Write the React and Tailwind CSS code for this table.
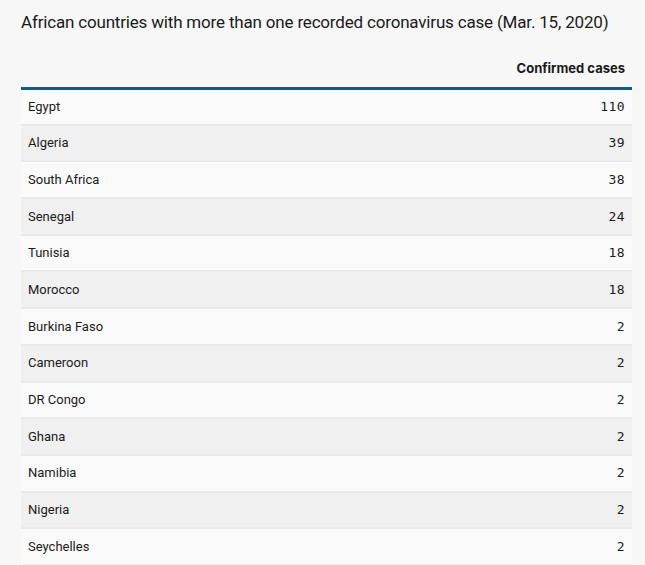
import React from 'react';

const rows = [
  ['Egypt', 110],
  ['Algeria', 39],
  ['South Africa', 38],
  ['Senegal', 24],
  ['Tunisia', 18],
  ['Morocco', 18],
  ['Burkina Faso', 2],
  ['Cameroon', 2],
  ['DR Congo', 2],
  ['Ghana', 2],
  ['Namibia', 2],
  ['Nigeria', 2],
  ['Seychelles', 2],
];

export default function App() {
  return (
    <div className="min-h-screen bg-[#f7f7f7] px-[21px] pt-[11px] text-[#1a1a1a]" style={{ fontFamily: 'Roboto, "Liberation Sans", sans-serif' }}>
      <h1 className="whitespace-nowrap text-[17px] leading-[22px] font-normal tracking-[-0.18px]">
        African countries with more than one recorded coronavirus case (Mar. 15, 2020)
      </h1>
      <table className="mt-[26px] w-[611px] border-collapse text-[13px]">
        <thead>
          <tr className="border-b-[3px] border-[#0d5a91]">
            <th></th>
            <th className="px-[7px] pb-[8px] text-right font-bold text-[13px] leading-[19.5px] font-[Inter,sans-serif]">Confirmed cases</th>
          </tr>
        </thead>
        <tbody>
          {rows.map(([name, n], i) => (
            <tr key={name} className={`border-b-2 border-[#e9e9e9] ${i % 2 ? 'bg-[#f0f0f0]' : 'bg-[#fafafa]'}`}>
              <td className="h-[36.7px] px-[7px]">{name}</td>
              <td className="h-[36.7px] px-[7px] text-right font-['DejaVu_Sans_Mono',monospace] text-[13px] tracking-[0.4px]">{n}</td>
            </tr>
          ))}
        </tbody>
      </table>
    </div>
  );
}
